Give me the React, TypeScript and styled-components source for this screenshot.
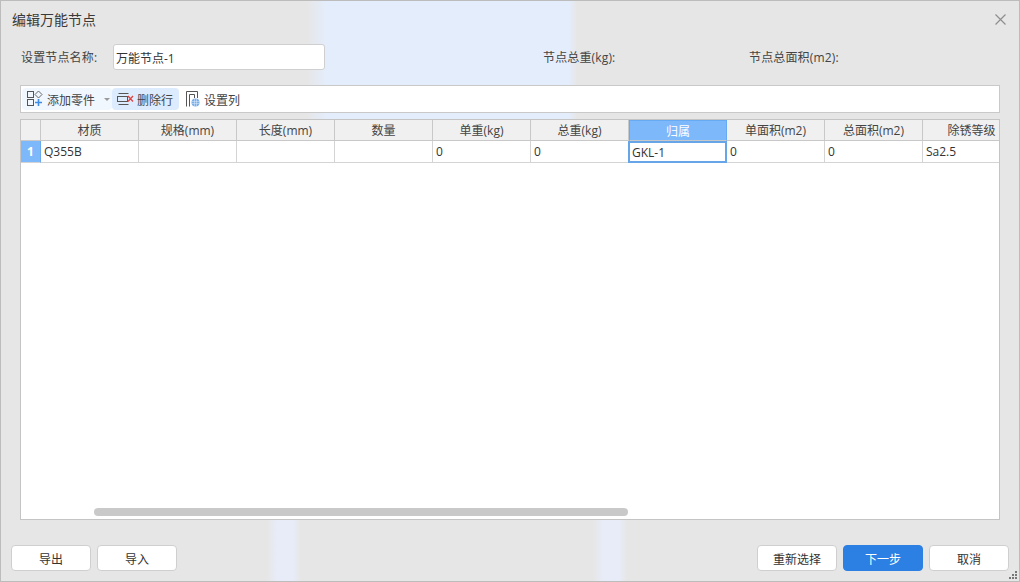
import React from "react";
import styled, { createGlobalStyle } from "styled-components";

const GlobalStyle = createGlobalStyle`
  html, body {
    margin: 0;
    padding: 0;
    background: #e6e6e6;
  }
  * {
    box-sizing: border-box;
  }
`;

const FONT = `"Open Sans", "Noto Sans CJK SC", sans-serif`;

const Dialog = styled.div`
  position: relative;
  display: flex;
  flex-direction: column;
  width: 1020px;
  height: 582px;
  overflow: hidden;
  border: 1px solid #bcbcbc;
  font-family: ${FONT};
  font-size: 12px;
  color: #333;
  background-color: #e6e6e6;
  background-image:
    linear-gradient(
      90deg,
      transparent 306px,
      #e4edfc 325px,
      #e4edfc 568px,
      transparent 576px
    ),
    linear-gradient(
      90deg,
      transparent 266px,
      #e8ecf8 276px,
      #e8ecf8 292px,
      transparent 300px,
      transparent 592px,
      #e8ecf8 602px,
      #e8ecf8 618px,
      transparent 626px
    );
  background-repeat: no-repeat;
  background-size: 100% 120px, 100% 62px;
  background-position: top left, bottom left;
`;

const TitleBar = styled.div`
  display: flex;
  align-items: center;
  justify-content: space-between;
  height: 38px;
  padding: 0 13px 1px 11px;
`;

const Title = styled.div`
  font-size: 14px;
  line-height: 20px;
  color: #3a3a3a;
`;

const CloseButton = styled.button`
  display: flex;
  padding: 0;
  border: none;
  background: none;
`;

const InfoRow = styled.div`
  display: flex;
  align-items: center;
  height: 26px;
  margin-top: 5px;
  padding-left: 20px;
`;

const FieldLabel = styled.span<{ $width: number }>`
  flex: none;
  width: ${(p) => p.$width}px;
  padding-top: 2px;
  color: #444;
  line-height: 18px;
  letter-spacing: 0.15px;
`;

const NameInput = styled.input`
  flex: none;
  width: 212px;
  height: 26px;
  margin-right: 218px;
  padding: 1px 2px 0;
  border: 1px solid #cfcfcf;
  border-radius: 3px;
  outline: none;
  background: #fff;
  font-family: ${FONT};
  font-size: 12px;
  color: #333;
`;

const Toolbar = styled.div`
  display: flex;
  align-items: center;
  height: 28px;
  margin: 15px 19px 0;
  padding-left: 1px;
  border: 1px solid #c9c9c9;
  background: #fff;
`;

const ToolButton = styled.div<{ $tone?: "soft" | "strong"; $width: number; $gap: number; $inset: number }>`
  display: flex;
  align-items: center;
  flex: none;
  gap: ${(p) => p.$gap}px;
  width: ${(p) => p.$width}px;
  height: 22px;
  padding-left: ${(p) => p.$inset}px;
  border-radius: 4px;
  background: ${(p) =>
    p.$tone === "strong" ? "#dcebfd" : p.$tone === "soft" ? "#f0f7ff" : "transparent"};
  font-size: 12px;
  color: #444;
`;

const ToolLabel = styled.span`
  padding-top: 2px;
`;

const Caret = styled.span`
  width: 0;
  height: 0;
  margin-left: 5px;
  border-top: 3px solid #9a9a9a;
  border-left: 3px solid transparent;
  border-right: 3px solid transparent;
`;

const TablePanel = styled.div`
  position: relative;
  flex: none;
  height: 401px;
  margin: 6px 19px 0;
  overflow: hidden;
  border: 1px solid #c4c4c4;
  background: #fff;
`;

const GridRow = styled.div`
  display: grid;
  grid-template-columns: 20px repeat(10, 98px);
  width: 1000px;
`;

const HeaderCell = styled.div<{ $active?: boolean }>`
  display: flex;
  align-items: center;
  justify-content: center;
  height: 21px;
  padding-top: 2px;
  border-right: 1px solid ${(p) => (p.$active ? "#66aaf4" : "#c8c8c8")};
  border-bottom: 1px solid #c8c8c8;
  ${(p) => (p.$active ? "border-top: 1px solid #66aaf4; border-left: 1px solid #66aaf4;" : "")}
  background: ${(p) => (p.$active ? "#7db8fb" : "#f0f0f0")};
  color: ${(p) => (p.$active ? "#fff" : "#444")};
  line-height: 16px;
  white-space: nowrap;
`;

const IndexCell = styled.div`
  display: flex;
  align-items: center;
  justify-content: center;
  height: 22px;
  border-right: 1px solid #6aa9ee;
  border-bottom: 1px solid #d4d4d4;
  background: #7db8fb;
  color: #fff;
  font-weight: 700;
`;

const BodyCell = styled.div<{ $active?: boolean }>`
  display: flex;
  align-items: center;
  height: 22px;
  padding-left: 3px;
  border-right: 1px solid #d4d4d4;
  border-bottom: 1px solid #d4d4d4;
  ${(p) => (p.$active ? "border: 2px solid #66a6e8; padding-left: 2px; margin-left: -1px;" : "")}
  background: #fff;
  color: #333;
  white-space: nowrap;
`;

const ScrollThumb = styled.div`
  position: absolute;
  left: 73px;
  bottom: 3px;
  width: 534px;
  height: 8px;
  border-radius: 4px;
  background: #c9c9c9;
`;

const Footer = styled.div`
  display: flex;
  align-items: center;
  height: 26px;
  margin-top: 25px;
  padding: 0 10px;
`;

const FooterGroup = styled.div`
  display: flex;
  gap: 6px;
`;

const Spacer = styled.div`
  flex: 1;
`;

const FooterButton = styled.button<{ $primary?: boolean }>`
  width: 80px;
  height: 26px;
  padding: 2px 0 0;
  border: 1px solid ${(p) => (p.$primary ? "#2c7fe3" : "#cfcfcf")};
  border-radius: 4px;
  background: ${(p) => (p.$primary ? "#2c7fe3" : "#fff")};
  font-family: ${FONT};
  font-size: 12px;
  color: ${(p) => (p.$primary ? "#fff" : "#333")};
`;

const ResizeGrip = styled.svg`
  position: absolute;
  right: 0;
  bottom: 0;
`;

const CloseIcon = () => (
  <svg width="11" height="11" viewBox="0 0 11 11">
    <path d="M0.5 0.5 L10.5 10.5 M10.5 0.5 L0.5 10.5" stroke="#8e8e8e" strokeWidth="1.2" fill="none" />
  </svg>
);

const AddPartIcon = () => (
  <svg width="16" height="16" viewBox="0 0 16 16" fill="none">
    <rect x="0.5" y="0.5" width="6" height="6" stroke="#555" />
    <rect x="0.5" y="8.5" width="6" height="6" stroke="#555" />
    <path d="M11.5 0 L15 3.5 L11.5 7 L8 3.5 Z" stroke="#666" />
    <path d="M11.5 8 V15 M8 11.5 H15" stroke="#3d8de8" strokeWidth="1.6" />
  </svg>
);

const DeleteRowIcon = () => (
  <svg width="17" height="13" viewBox="0 0 17 13" fill="none">
    <path d="M1.5 0.5 H11.5 M1.5 11.5 H11.5" stroke="#555" />
    <rect x="0.5" y="3.5" width="10" height="5" stroke="#555" />
    <path d="M11 3 L16 8.5 M16 3 L11 8.5" stroke="#e2433f" strokeWidth="1.3" />
  </svg>
);

const ColumnsIcon = () => (
  <svg width="14" height="16" viewBox="0 0 14 16" fill="none">
    <path d="M0.5 15.5 V0.5 H11.5 V7" stroke="#555" />
    <path d="M3.5 15.5 V3.5 H8.5 V7" stroke="#555" />
    <circle cx="9.5" cy="11.5" r="4" fill="#7aaee8" />
    <path d="M6 10.5 H13 M6 12.5 H13 M8.5 8 V15 M10.5 8 V15" stroke="#d4e5f9" strokeWidth="0.6" />
  </svg>
);

const columns = ["材质", "规格(mm)", "长度(mm)", "数量", "单重(kg)", "总重(kg)", "归属", "单面积(m2)", "总面积(m2)", "除锈等级"];
const values = ["Q355B", "", "", "", "0", "0", "GKL-1", "0", "0", "Sa2.5"];
const ACTIVE_COLUMN = 6;

export default function App() {
  return (
    <>
      <GlobalStyle />
      <Dialog>
        <TitleBar>
          <Title>编辑万能节点</Title>
          <CloseButton>
            <CloseIcon />
          </CloseButton>
        </TitleBar>
        <InfoRow>
          <FieldLabel $width={92}>设置节点名称:</FieldLabel>
          <NameInput defaultValue="万能节点-1" />
          <FieldLabel $width={206}>节点总重(kg):</FieldLabel>
          <FieldLabel $width={120}>节点总面积(m2):</FieldLabel>
        </InfoRow>
        <Toolbar>
          <ToolButton $tone="soft" $width={90} $gap={4} $inset={5}>
            <AddPartIcon />
            <ToolLabel>添加零件</ToolLabel>
            <Caret />
          </ToolButton>
          <ToolButton $tone="strong" $width={67} $gap={3} $inset={5}>
            <DeleteRowIcon />
            <ToolLabel>删除行</ToolLabel>
          </ToolButton>
          <ToolButton $width={70} $gap={4} $inset={7}>
            <ColumnsIcon />
            <ToolLabel>设置列</ToolLabel>
          </ToolButton>
        </Toolbar>
        <TablePanel>
          <GridRow>
            <HeaderCell />
            {columns.map((c, i) => (
              <HeaderCell key={c} $active={i === ACTIVE_COLUMN}>
                {c}
              </HeaderCell>
            ))}
          </GridRow>
          <GridRow>
            <IndexCell>1</IndexCell>
            {values.map((v, i) => (
              <BodyCell key={i} $active={i === ACTIVE_COLUMN}>
                {v}
              </BodyCell>
            ))}
          </GridRow>
          <ScrollThumb />
        </TablePanel>
        <Footer>
          <FooterGroup>
            <FooterButton>导出</FooterButton>
            <FooterButton>导入</FooterButton>
          </FooterGroup>
          <Spacer />
          <FooterGroup>
            <FooterButton>重新选择</FooterButton>
            <FooterButton $primary>下一步</FooterButton>
            <FooterButton>取消</FooterButton>
          </FooterGroup>
        </Footer>
        <ResizeGrip width="10" height="10" viewBox="0 0 10 10" fill="#777">
          <rect x="6" y="0" width="2" height="2" />
          <rect x="3" y="3" width="2" height="2" />
          <rect x="6" y="3" width="2" height="2" />
          <rect x="0" y="6" width="2" height="2" />
          <rect x="3" y="6" width="2" height="2" />
          <rect x="6" y="6" width="2" height="2" />
        </ResizeGrip>
      </Dialog>
    </>
  );
}
